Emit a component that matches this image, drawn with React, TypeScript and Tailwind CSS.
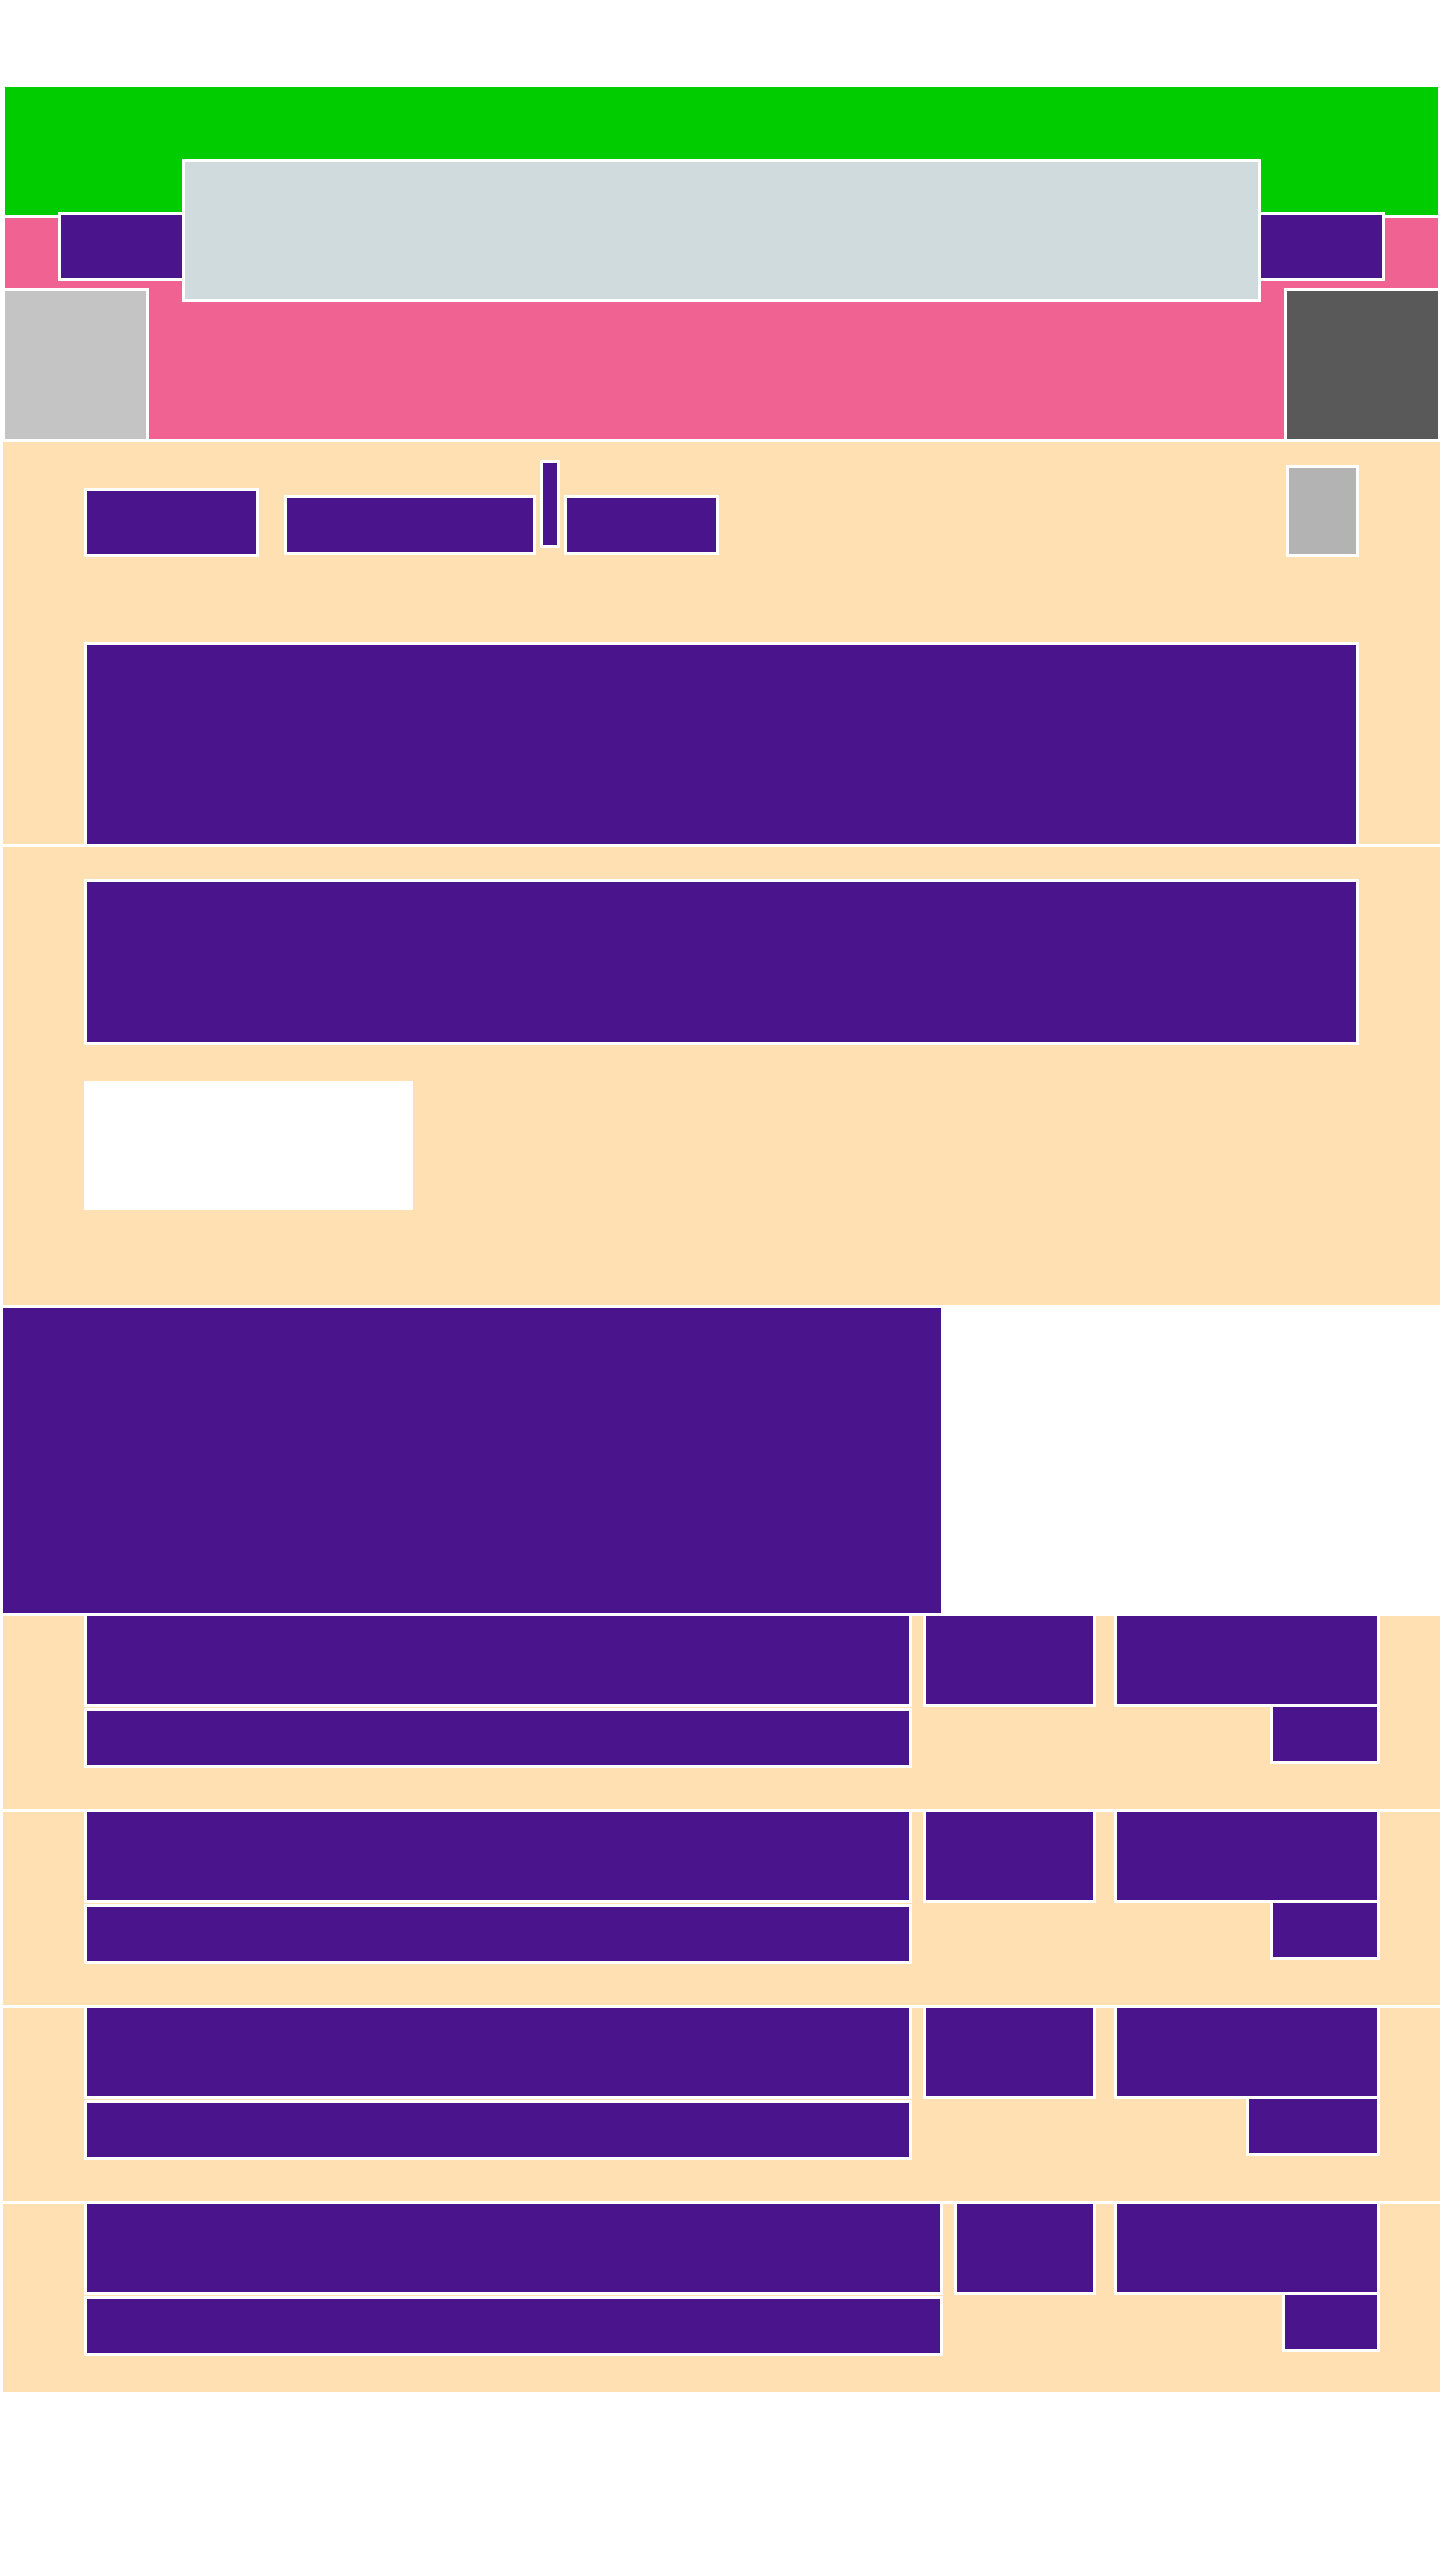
const PURPLE = "bg-[#4a148c]";

type Row = { a: number; b: number; c2: number; last?: boolean };

const rows: Row[] = [
  { a: 828, b: 173, c2: 110 },
  { a: 828, b: 173, c2: 110 },
  { a: 828, b: 173, c2: 134 },
  { a: 859, b: 142, c2: 98, last: true },
];

function ListRow({ row }: { row: Row }) {
  return (
    <div
      className={
        "ml-[3px] flex items-start border-t-[3px] border-white bg-[#ffe0b2] pl-[81px] " +
        (row.last ? "h-[191px]" : "h-[196px]")
      }
    >
      <div className="flex flex-col">
        <div
          className={`h-[91px] border-x-[3px] border-b-[3px] border-white ${PURPLE}`}
          style={{ width: row.a }}
        />
        <div
          className={`mt-px h-[60px] border-[3px] border-white ${PURPLE}`}
          style={{ width: row.a }}
        />
      </div>
      <div
        className={`ml-[11px] h-[91px] border-x-[3px] border-b-[3px] border-white ${PURPLE}`}
        style={{ width: row.b }}
      />
      <div className="ml-[18px] flex w-[266px] flex-col items-end">
        <div className={`h-[91px] w-full border-x-[3px] border-b-[3px] border-white ${PURPLE}`} />
        <div
          className={`h-[57px] border-x-[3px] border-b-[3px] border-white ${PURPLE}`}
          style={{ width: row.c2 }}
        />
      </div>
    </div>
  );
}

export default function App() {
  return (
    <div className="min-h-[2560px] bg-white pt-[84px]">
      {/* header */}
      <div className="relative ml-[2px] flex flex-col border-y-[3px] border-l-[3px] border-r-[2px] border-white">
        <div className="h-[131px] border-b-[3px] border-white bg-[#00cc00]" />
        <div className="flex h-[221px] items-end justify-between bg-[#f06292]">
          <div className="h-[151px] w-[144px] border-r-[3px] border-t-[3px] border-white bg-[#c4c4c4]" />
          <div className="h-[151px] w-[154px] border-l-[3px] border-t-[3px] border-white bg-[#595959]" />
        </div>
        <div className="absolute left-[53px] top-[72px] flex items-start">
          <div className={`mt-[53px] h-[69px] w-[124px] border-y-[3px] border-l-[3px] border-white ${PURPLE}`} />
          <div className="h-[143px] w-[1079px] border-[3px] border-white bg-[#cfdbdc]" />
          <div className={`mt-[53px] h-[69px] w-[124px] border-y-[3px] border-r-[3px] border-white ${PURPLE}`} />
        </div>
      </div>

      {/* nav + hero */}
      <div className="ml-[3px] flex flex-col border-b-[3px] border-white bg-[#ffe0b2] px-[81px] pt-[18px]">
        <div className="flex h-[97px] items-start">
          <div className={`mt-[28px] h-[69px] w-[175px] border-[3px] border-white ${PURPLE}`} />
          <div className={`ml-[25px] mt-[35px] h-[60px] w-[252px] border-[3px] border-white ${PURPLE}`} />
          <div className={`ml-[4px] h-[88px] w-[20px] border-[3px] border-white ${PURPLE}`} />
          <div className={`ml-[4px] mt-[35px] h-[60px] w-[155px] border-[3px] border-white ${PURPLE}`} />
          <div className="ml-auto mt-[5px] h-[92px] w-[73px] border-[3px] border-white bg-[#b3b3b3]" />
        </div>
        <div className={`mt-[85px] h-[202px] w-full border-x-[3px] border-t-[3px] border-white ${PURPLE}`} />
      </div>

      {/* intro block */}
      <div className="ml-[3px] flex h-[461px] flex-col border-b-[3px] border-white bg-[#ffe0b2] px-[81px] pt-[32px]">
        <div className={`h-[166px] w-full border-[3px] border-white ${PURPLE}`} />
        <div className="mt-[36px] h-[129px] w-[329px] bg-white" />
      </div>

      {/* feature */}
      <div className="ml-[3px] flex">
        <div className={`h-[305px] w-[938px] ${PURPLE}`} />
      </div>

      {/* list */}
      {rows.map((row, i) => (
        <ListRow key={i} row={row} />
      ))}
    </div>
  );
}
